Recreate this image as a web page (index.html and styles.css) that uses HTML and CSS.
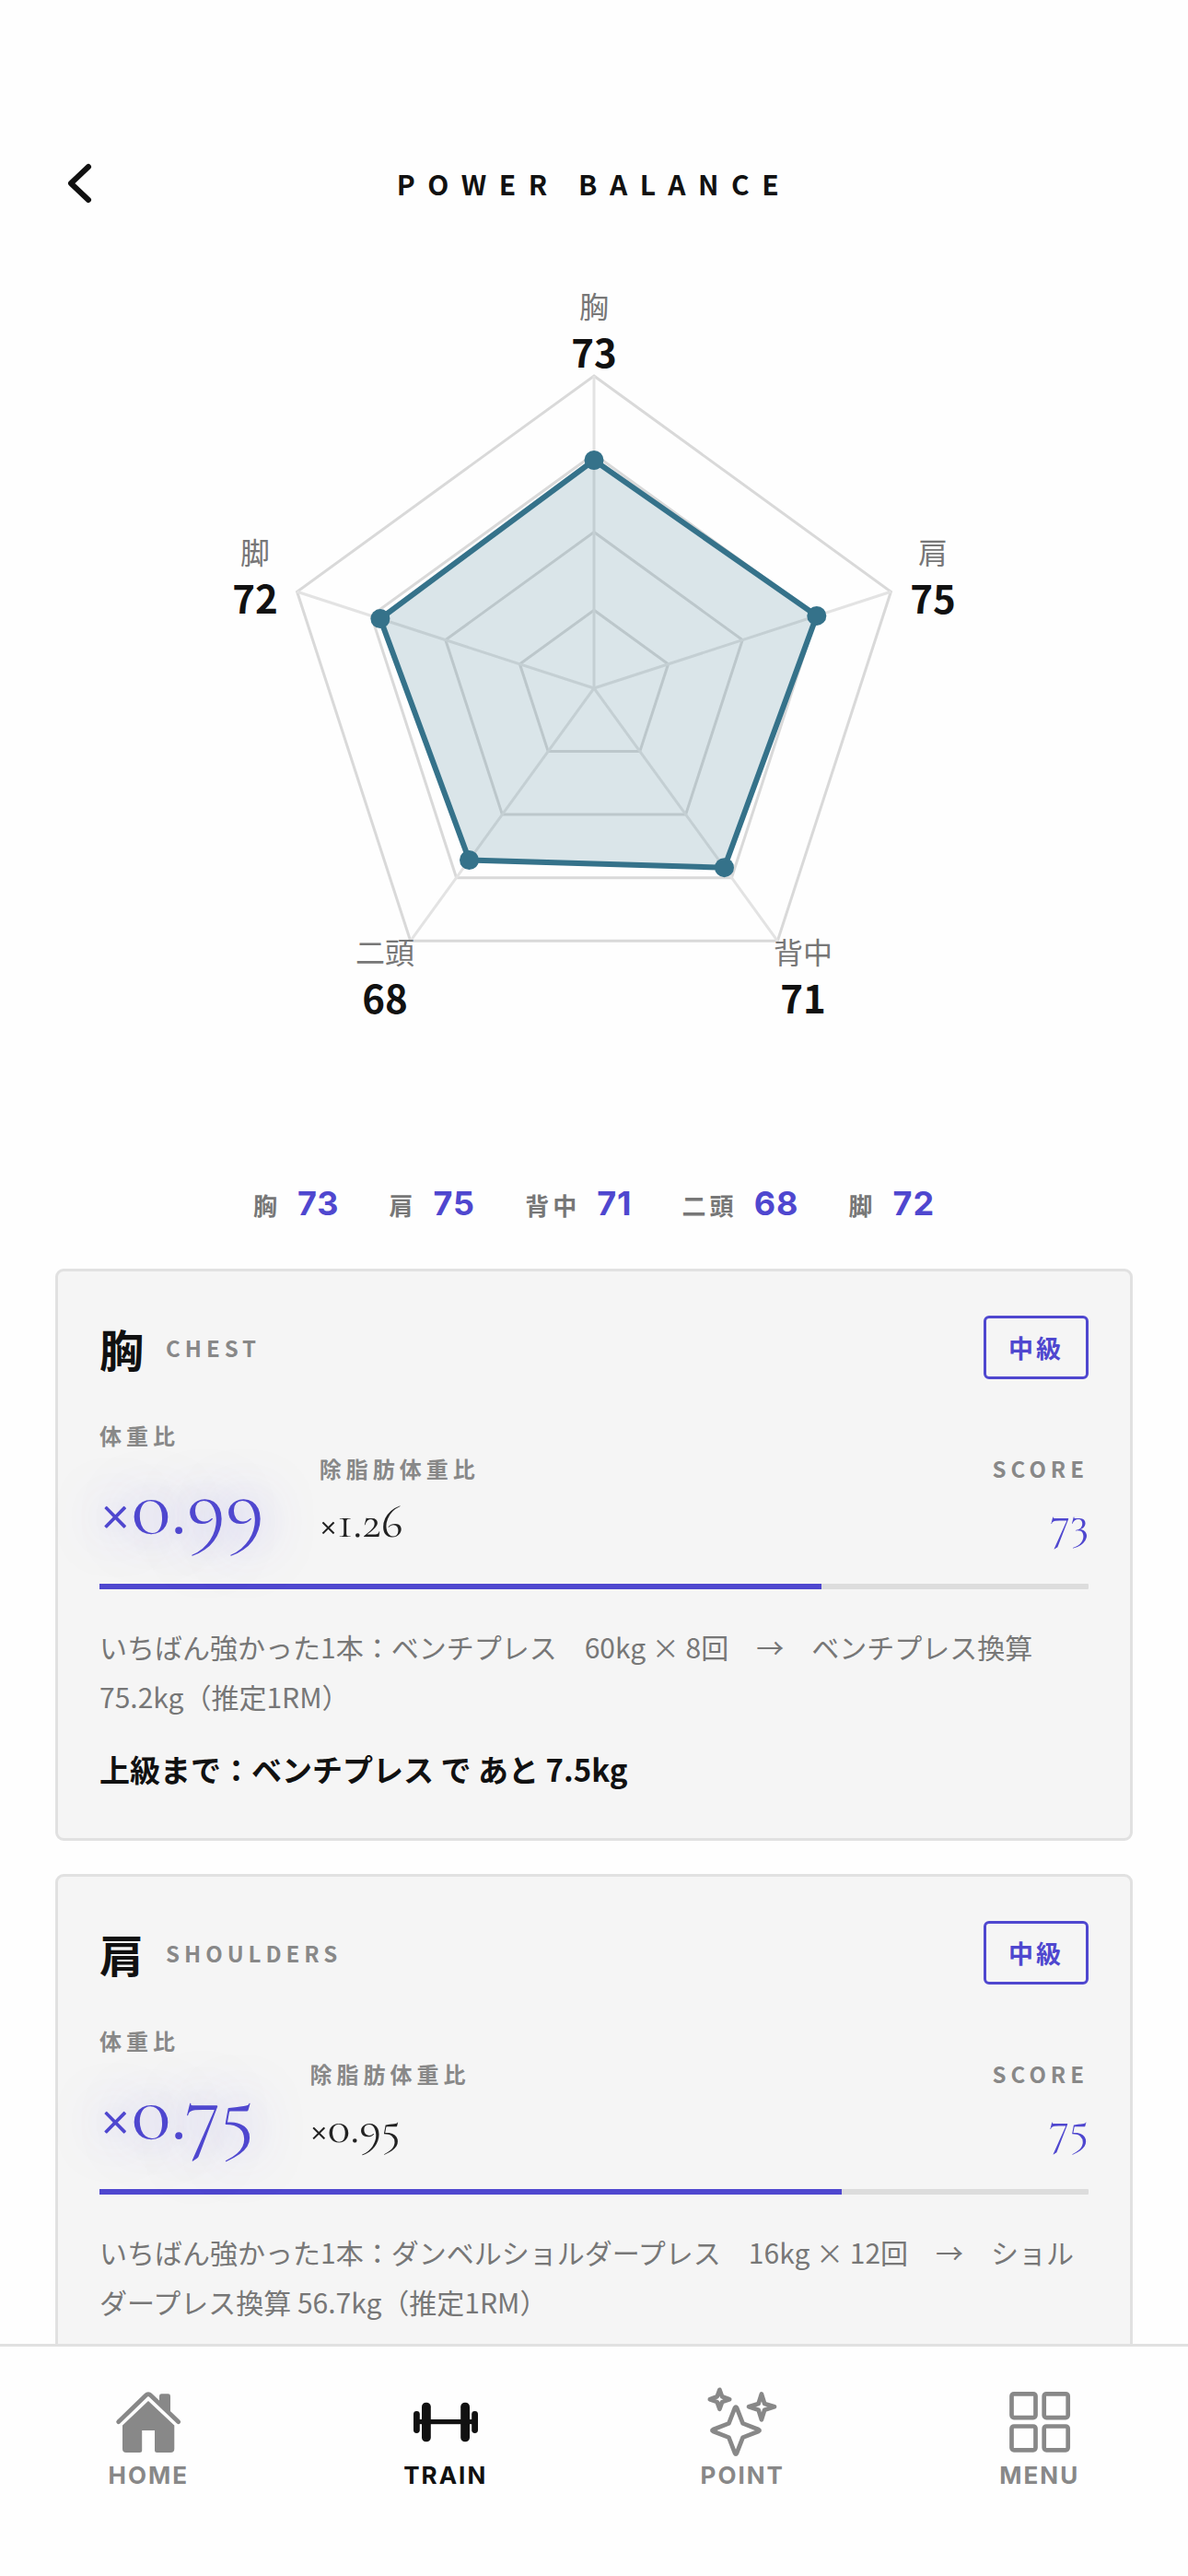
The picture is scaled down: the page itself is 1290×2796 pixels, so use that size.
FILE: index.html
```html
<!DOCTYPE html>
<html lang="ja">
<head>
  <meta charset="UTF-8">
  <meta name="viewport" content="width=device-width, initial-scale=1.0">
  <title>POWER BALANCE</title>
  <link rel="stylesheet" href="styles.css">
</head>
<body>

  <div class="app">
    <main class="content">
      <header class="topbar">
        <button type="button" class="back-button" aria-label="戻る">
          <svg viewBox="0 0 48 64" width="48" height="64">
            <path d="M36 14 L17 32 L36 50" />
          </svg>
        </button>
        <h1>POWER BALANCE</h1>
      </header>

      <svg class="radar" viewBox="0 0 860 960">
        <!-- grid -->
        <g class="radar-grid">
          <polygon points="430,148 752.4,382.2 629.3,761.3 230.7,761.3 107.6,382.2" />
          <polygon points="430,232.8 671.8,408.4 579.4,692.7 280.6,692.7 188.2,408.4" />
          <polygon points="430,317.5 591.2,434.6 529.6,624.1 330.4,624.1 268.8,434.6" />
          <polygon points="430,402.3 510.6,460.8 479.8,555.6 380.2,555.6 349.4,460.8" />
        </g>
        <g class="radar-axis">
          <path d="M430 487 V148" />
          <path d="M430 487 L752.4 382.2" />
          <path d="M430 487 L629.3 761.3" />
          <path d="M430 487 L230.7 761.3" />
          <path d="M430 487 L107.6 382.2" />
        </g>
        <!-- scores -->
        <polygon class="radar-area" points="430,239.5 671.8,408.4 571.5,681.7 294.5,673.5 197.9,411.6" />
        <g class="radar-dots">
          <circle cx="430" cy="239.5" r="10.5" />
          <circle cx="671.8" cy="408.4" r="10.5" />
          <circle cx="571.5" cy="681.7" r="10.5" />
          <circle cx="294.5" cy="673.5" r="10.5" />
          <circle cx="197.9" cy="411.6" r="10.5" />
        </g>
        <g class="radar-label">
          <text x="430" y="85">胸</text>
          <text x="798" y="352">肩</text>
          <text x="657" y="786">背中</text>
          <text x="203" y="786">二頭</text>
          <text x="62" y="352">脚</text>
        </g>
        <g class="radar-value">
          <text x="430" y="139">73</text>
          <text x="798" y="406">75</text>
          <text x="657" y="840">71</text>
          <text x="203" y="840">68</text>
          <text x="62" y="406">72</text>
        </g>
      </svg>

      <ul class="legend">
        <li><span>胸</span><b>73</b></li>
        <li><span>肩</span><b>75</b></li>
        <li><span>背中</span><b>71</b></li>
        <li><span>二頭</span><b>68</b></li>
        <li><span>脚</span><b>72</b></li>
      </ul>

      <section class="card-list">
        <article class="card">
          <div class="card-header">
            <h2>胸</h2>
            <span class="card-sub">CHEST</span>
            <span class="badge">中級</span>
          </div>
          <div class="metrics">
            <div class="metric metric-main">
              <span class="metric-label">体重比</span>
              <span class="metric-value">×0.99</span>
            </div>
            <div class="metric">
              <span class="metric-label">除脂肪体重比</span>
              <span class="metric-value">×1.26</span>
            </div>
            <div class="metric metric-score">
              <span class="metric-label">SCORE</span>
              <span class="metric-value">73</span>
            </div>
          </div>
          <div class="bar"><div class="bar-fill" style="width: 73%"></div></div>
          <p class="best">いちばん強かった1本：ベンチプレス　60kg × 8回　→　ベンチプレス換算 75.2kg（推定1RM）</p>
          <p class="next">上級まで：ベンチプレス で あと 7.5kg</p>
        </article>

        <article class="card">
          <div class="card-header">
            <h2>肩</h2>
            <span class="card-sub">SHOULDERS</span>
            <span class="badge">中級</span>
          </div>
          <div class="metrics">
            <div class="metric metric-main">
              <span class="metric-label">体重比</span>
              <span class="metric-value">×0.75</span>
            </div>
            <div class="metric">
              <span class="metric-label">除脂肪体重比</span>
              <span class="metric-value">×0.95</span>
            </div>
            <div class="metric metric-score">
              <span class="metric-label">SCORE</span>
              <span class="metric-value">75</span>
            </div>
          </div>
          <div class="bar"><div class="bar-fill" style="width: 75%"></div></div>
          <p class="best">いちばん強かった1本：ダンベルショルダープレス　16kg × 12回　→　ショルダープレス換算 56.7kg（推定1RM）</p>
        </article>
      </section>
    </main>

    <nav class="tabbar">
      <a href="#" class="tab">
        <svg viewBox="0 0 84 84" width="84" height="84">
          <path class="line" d="M9.6 41.7 L39.3 13 Q42 10.2 44.7 13 L74.8 41.7" />
          <path class="solid" d="M54 22 V13.5 Q54 11.3 56.5 11.3 H63.5 Q66 11.3 66 13.5 V34 Z" />
          <path class="solid" d="M42 19 L70.3 45.5 V71 Q70.3 75 66.3 75 H51.5 Q49 75 49 72.5 V51 H35.2 V72.5 Q35.2 75 32.7 75 H18 Q14 75 14 71 V45.5 Z" />
        </svg>
        <span>HOME</span>
      </a>
      <a href="#" class="tab active">
        <svg viewBox="0 0 84 84" width="84" height="84">
          <g class="solid">
            <rect x="7" y="30" width="6.8" height="24" rx="3.4" />
            <rect x="16" y="20.7" width="9.8" height="42.6" rx="4.6" />
            <rect x="58.2" y="20.7" width="9.8" height="42.6" rx="4.6" />
            <rect x="70.2" y="30" width="6.8" height="24" rx="3.4" />
            <rect x="10" y="39" width="64" height="5.2" />
          </g>
        </svg>
        <span>TRAIN</span>
      </a>
      <a href="#" class="tab">
        <svg viewBox="0 0 84 84" width="84" height="84">
          <g class="line">
            <path d="M34 26.4 Q35 24.6 36 26.4 L42.6 43.4 L59.6 50 Q61.6 51 59.6 52 L42.6 58.6 L36 75.6 Q35 77.6 34 75.6 L27.4 58.6 L10.4 52 Q8.4 51 10.4 50 L27.4 43.4 Z" />
            <path d="M62.9 11.5 L66.2 22 L77 25.3 L66.2 28.8 L62.9 39.3 L59.6 28.8 L49 25.3 L59.6 22 Z" />
            <path d="M17.4 6.8 L20.1 14.3 L28.2 17.2 L20.1 20.1 L17.4 27.8 L14.7 20.1 L6.8 17.2 L14.7 14.3 Z" />
          </g>
        </svg>
        <span>POINT</span>
      </a>
      <a href="#" class="tab">
        <svg viewBox="0 0 84 84" width="84" height="84">
          <g class="line">
            <rect x="11.5" y="11.3" width="26" height="25.8" rx="2.5" />
            <rect x="46.7" y="11.3" width="26" height="25.8" rx="2.5" />
            <rect x="11.5" y="46.5" width="26" height="25.8" rx="2.5" />
            <rect x="46.7" y="46.5" width="26" height="25.8" rx="2.5" />
          </g>
        </svg>
        <span>MENU</span>
      </a>
    </nav>
  </div>

</body>
</html>
```
FILE: styles.css
```css
* {
  margin: 0;
  padding: 0;
  box-sizing: border-box;
}

:root {
  --accent: #4f47cf;
  --chart: #35728a;
  --text: #111;
  --muted: #888;
  --border: #e1e1e1;
}

body {
  font-family: "Noto Sans CJK JP", sans-serif;
  background-color: #fefefe;
  color: var(--text);
}

.app {
  height: 100vh;
  display: flex;
  flex-direction: column;
}

.content {
  flex: 1;
  min-height: 0;
  overflow-y: auto;
  scrollbar-width: none;
  padding: 167px 60px 0;
}

/* header */
.topbar {
  display: grid;
  grid-template-columns: 1fr auto 1fr;
  align-items: center;
  height: 64px;
  margin-bottom: 29px;
}

.back-button {
  width: 48px;
  height: 64px;
  border: none;
  background: none;
  cursor: pointer;
}

.back-button svg {
  display: block;
  fill: none;
  stroke: var(--text);
  stroke-width: 6;
  stroke-linecap: round;
  stroke-linejoin: round;
}

h1 {
  font-size: 30px;
  font-weight: 700;
  letter-spacing: 0.45em;
}

/* radar chart */
.radar {
  display: block;
  width: 860px;
  max-width: 100%;
  margin: 0 auto;
}

.radar-grid {
  fill: none;
  stroke: #d9d9d9;
  stroke-width: 3;
}

.radar-axis {
  fill: none;
  stroke: #e3e3e3;
  stroke-width: 3;
}

.radar-area {
  fill: var(--chart);
  fill-opacity: 0.18;
  stroke: var(--chart);
  stroke-width: 6;
}

.radar-dots {
  fill: var(--chart);
}

.radar-label {
  font-size: 32px;
  fill: #777;
  text-anchor: middle;
}

.radar-value {
  font-size: 42px;
  font-weight: 700;
  fill: var(--text);
  text-anchor: middle;
}

.legend {
  display: flex;
  justify-content: center;
  gap: 54px;
  margin: 62px 0 45px;
  list-style: none;
}

.legend li {
  display: flex;
  align-items: baseline;
  gap: 18px;
  line-height: 48px;
}

.legend span {
  font-size: 26px;
  font-weight: 700;
  letter-spacing: 4px;
  color: #777;
}

.legend b {
  font-family: "Inter", sans-serif;
  font-size: 36px;
  font-weight: 700;
  letter-spacing: 1px;
  color: var(--accent);
}

/* cards */
.card-list {
  display: flex;
  flex-direction: column;
  gap: 36px;
}

.card {
  padding: 48px 45px;
  background-color: #f5f5f5;
  border: 3px solid var(--border);
  border-radius: 9px;
}

.card-header {
  display: flex;
  align-items: center;
  gap: 24px;
  margin-bottom: 43px;
}

h2 {
  font-size: 48px;
  font-weight: 700;
  line-height: 1;
}

.card-sub {
  font-size: 24px;
  font-weight: 700;
  letter-spacing: 5px;
  color: var(--muted);
}

.badge {
  margin-left: auto;
  padding: 0 24px;
  border: 3px solid var(--accent);
  border-radius: 6px;
  font-size: 27px;
  font-weight: 700;
  line-height: 63px;
  letter-spacing: 3px;
  color: var(--accent);
}

.metrics {
  display: flex;
  align-items: flex-end;
  gap: 60px;
  margin-bottom: 31px;
}

.metric {
  display: flex;
  flex-direction: column;
  gap: 4px;
}

.metric-label {
  font-size: 24px;
  font-weight: 700;
  line-height: 36px;
  letter-spacing: 5px;
  color: var(--muted);
}

.metric-value {
  font-family: "Cormorant Garamond", "Liberation Serif", serif;
  font-size: 51px;
  line-height: 72px;
  color: #222;
}

.metric-main {
  gap: 8px;
}

.metric-main .metric-value {
  font-size: 90px;
  line-height: 104px;
  color: var(--accent);
  text-shadow: 0 0 54px rgba(79, 70, 229, 0.55);
}

.metric-score {
  margin-left: auto;
  text-align: right;
}

.metric-score .metric-value {
  color: var(--accent);
}

.bar {
  height: 6px;
  margin-bottom: 35px;
  background-color: #dcdcdc;
  border-radius: 1px;
}

.bar-fill {
  height: 100%;
  background-color: var(--accent);
}

.best {
  font-size: 30px;
  line-height: 54px;
  color: #777;
}

.next {
  margin-top: 26px;
  font-size: 33px;
  font-weight: 700;
  line-height: 53px;
}

/* bottom navigation */
.tabbar {
  display: flex;
  padding: 40px 0 93px;
  background-color: #fefefe;
  border-top: 3px solid var(--border);
}

.tab {
  flex: 1;
  display: flex;
  flex-direction: column;
  align-items: center;
  font-family: "Inter", sans-serif;
  font-size: 26px;
  font-weight: 700;
  line-height: 32px;
  letter-spacing: 2px;
  color: var(--muted);
  text-decoration: none;
}

.tab.active {
  color: var(--text);
}

.tab .solid {
  fill: currentColor;
}

.tab .line {
  fill: none;
  stroke: currentColor;
  stroke-width: 4.7;
  stroke-linecap: round;
  stroke-linejoin: round;
}
```
